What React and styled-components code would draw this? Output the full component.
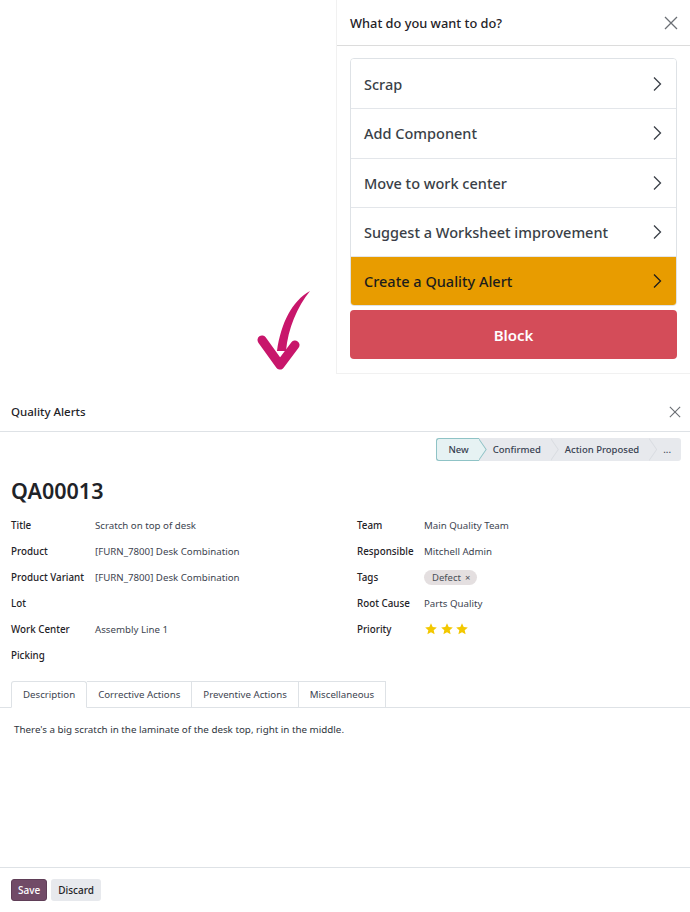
import React from 'react';
import styled, { createGlobalStyle } from 'styled-components';

const GlobalStyle = createGlobalStyle`
  html, body { margin: 0; padding: 0; background: #fff; }
  body { font-family: "Noto Sans", "Open Sans", sans-serif; color: #212529; }
  * { box-sizing: border-box; }
`;

const Page = styled.div`
  width: 690px;
  height: 912px;
  display: flex;
  flex-direction: column;
  overflow: hidden;
`;

// ------------------------- Top: action dialog

const TopRow = styled.div`
  display: flex;
  height: 374px;
`;

const ArrowArea = styled.div`
  flex: 1;
  display: flex;
  align-items: flex-end;
  justify-content: flex-end;
  padding: 0 22px 3px 0;
`;

const Panel = styled.div`
  width: 354px;
  border-left: 1px solid #f1f1f1;
  border-bottom: 1px solid #f1f1f1;
  display: flex;
  flex-direction: column;
`;

const PanelHeader = styled.div`
  height: 46px;
  padding: 0 12px 0 13px;
  display: flex;
  align-items: center;
  justify-content: space-between;
  border-bottom: 1px solid #dcdcdc;
  font-size: 12.8px;
  font-weight: 500;
  color: #1f2328;
`;

const PanelBody = styled.div`
  padding: 12px 13px 0;
  display: flex;
  flex-direction: column;
  gap: 4px;
`;

const ActionList = styled.div`
  border: 1px solid #dee2e6;
  border-radius: 4px;
  overflow: hidden;
`;

const ActionRow = styled.div`
  height: 49.25px;
  padding: 0 14px 0 13px;
  display: flex;
  align-items: center;
  justify-content: space-between;
  font-size: 14.5px;
  font-weight: 500;
  color: ${p => (p.$warning ? '#1c1c1c' : '#3a3f47')};
  background: ${p => (p.$warning ? '#e89c00' : '#fff')};
  border-top: ${p => (p.$first ? 'none' : '1px solid #e3e6ea')};
`;

const BlockBtn = styled.div`
  height: 49px;
  border-radius: 4px;
  background: #d44c59;
  color: #fff;
  display: flex;
  align-items: center;
  justify-content: center;
  font-size: 15px;
  font-weight: 600;
`;

const Chevron = () => (
  <svg width="10" height="16" viewBox="0 0 10 16">
    <path d="M2 1.5 L8.5 8 L2 14.5" fill="none" stroke="currentColor" strokeWidth="1.3" />
  </svg>
);

const CloseIcon = ({ size = 14, color = '#6b6f75' }) => (
  <svg width={size} height={size} viewBox="0 0 14 14">
    <path d="M1 1 L13 13 M13 1 L1 13" stroke={color} strokeWidth="1.3" fill="none" />
  </svg>
);

const CurvedArrow = () => (
  <svg width="60" height="82" viewBox="0 0 60 82">
    <path d="M56 2 C38 12 27 34 23 62 L32 62 C34 40 43 18 56 2 Z" fill="#c8166b" />
    <path d="M8 51 L26 76 L41 56" fill="none" stroke="#c8166b" strokeWidth="9" strokeLinecap="round" strokeLinejoin="round" />
  </svg>
);

// ------------------------- Form

const Form = styled.div`
  flex: 1;
  margin-top: 18px;
  display: flex;
  flex-direction: column;
`;

const FormHeader = styled.div`
  height: 40px;
  padding: 0 9px 0 11px;
  display: flex;
  align-items: center;
  justify-content: space-between;
  border-bottom: 1px solid #dee2e6;
  font-size: 11.5px;
  font-weight: 500;
  color: #1f2328;
`;

const StatusRow = styled.div`
  display: flex;
  justify-content: flex-end;
  padding: 6px 9px 0 0;
`;

const StatusBar = styled.div`
  display: flex;
  height: 23px;
  background: #e7e9ed;
  border-radius: 3px;
`;

const Stage = styled.div`
  position: relative;
  display: flex;
  align-items: center;
  padding: ${p => (p.$first ? '0 10px 0 11px' : '0 10px 0 14px')};
  font-size: 9.5px;
  font-weight: 500;
  color: #374151;
  background: ${p => (p.$active ? '#e6f2f3' : 'transparent')};
  border: ${p => (p.$active ? '1px solid #8fc3c6' : 'none')};
  border-right: none;
  border-radius: ${p => (p.$active ? '3px 0 0 3px' : '0')};
  z-index: ${p => (p.$active ? 2 : 1)};

  &::after {
    content: '';
    display: ${p => (p.$end ? 'none' : 'block')};
    position: absolute;
    right: -8px;
    top: ${p => (p.$active ? '-1px' : '0')};
    width: 8px;
    height: 23px;
    background: ${p => (p.$active ? '#8fc3c6' : '#d9dce1')};
    clip-path: polygon(0 0, 100% 50%, 0 100%, 0 94%, 86% 50%, 0 6%);
  }

  &::before {
    content: '';
    display: ${p => (p.$active ? 'block' : 'none')};
    position: absolute;
    right: -7px;
    top: 0;
    width: 7px;
    height: 21px;
    background: #e6f2f3;
    clip-path: polygon(0 0, 100% 50%, 0 100%);
  }
`;

const Sheet = styled.div`
  padding: 15px 11px 0;
`;

const RecordName = styled.h1`
  margin: 0;
  height: 30px;
  line-height: 30px;
  font-size: 21.5px;
  font-weight: 600;
  color: #1f2328;
`;

const Columns = styled.div`
  margin-top: 6px;
  display: grid;
  grid-template-columns: 346px 1fr;
`;

const FieldGroup = styled.div`
  display: grid;
  grid-template-columns: ${p => p.$labelWidth}px 1fr;
  grid-auto-rows: 26px;
  align-items: center;
`;

const Label = styled.div`
  font-size: 9.8px;
  font-weight: 500;
  color: #1f2328;
`;

const Value = styled.div`
  font-size: 9.7px;
  color: #3d4450;
  display: flex;
  align-items: center;
  gap: 1.5px;
`;

const Tag = styled.span`
  display: inline-flex;
  align-items: center;
  gap: 4px;
  height: 15px;
  padding: 0 7px 0 8px;
  border-radius: 8px;
  background: #e4dfe0;
  color: #4a4f57;
  font-size: 9.5px;
`;

const Star = () => (
  <svg width="14" height="14" viewBox="0 0 24 24">
    <path d="M12 2 L14.9 8.6 L22 9.3 L16.6 14.1 L18.2 21.2 L12 17.5 L5.8 21.2 L7.4 14.1 L2 9.3 L9.1 8.6 Z" fill="#f3c800" />
  </svg>
);

const Tabs = styled.div`
  margin-top: 13px;
  display: flex;
  padding-left: 11px;
  border-bottom: 1px solid #dee2e6;
`;

const Tab = styled.div`
  height: 27px;
  padding: 0 11px;
  margin-bottom: -1px;
  display: flex;
  align-items: center;
  font-size: 9.7px;
  color: #3d4450;
  background: #fff;
  border: 1px solid #dee2e6;
  border-left: ${p => (p.$first ? '1px solid #dee2e6' : 'none')};
  border-bottom: ${p => (p.$active ? '1px solid #fff' : '1px solid #dee2e6')};
  border-radius: ${p => (p.$active ? '3px 3px 0 0' : '0')};
`;

const TabContent = styled.div`
  flex: 1;
  padding: 15px 14px;
  font-size: 9.8px;
  color: #2f3540;
`;

const Footer = styled.div`
  height: 45px;
  border-top: 1px solid #dee2e6;
  padding: 11px 11px 0;
  display: flex;
  gap: 4px;
  align-items: flex-start;
`;

const Btn = styled.div`
  height: 22px;
  padding: 0 ${p => (p.$primary ? '6px' : '7px')};
  border-radius: 3px;
  display: flex;
  align-items: center;
  font-size: 10px;
  font-weight: 500;
  background: ${p => (p.$primary ? '#714b67' : '#e7e9ed')};
  color: ${p => (p.$primary ? '#fff' : '#1f2328')};
  border: ${p => (p.$primary ? '1px solid #5f3e57' : 'none')};
`;

const actions = ['Scrap', 'Add Component', 'Move to work center', 'Suggest a Worksheet improvement'];

const leftFields = [
  ['Title', 'Scratch on top of desk'],
  ['Product', '[FURN_7800] Desk Combination'],
  ['Product Variant', '[FURN_7800] Desk Combination'],
  ['Lot', ''],
  ['Work Center', 'Assembly Line 1'],
  ['Picking', ''],
];

const tabs = ['Description', 'Corrective Actions', 'Preventive Actions', 'Miscellaneous'];

export default function App() {
  return (
    <Page>
      <GlobalStyle />
      <TopRow>
        <ArrowArea>
          <CurvedArrow />
        </ArrowArea>
        <Panel>
          <PanelHeader>
            What do you want to do?
            <CloseIcon />
          </PanelHeader>
          <PanelBody>
            <ActionList>
              {actions.map((a, i) => (
                <ActionRow key={a} $first={i === 0}>
                  {a}
                  <Chevron />
                </ActionRow>
              ))}
              <ActionRow $warning>
                Create a Quality Alert
                <Chevron />
              </ActionRow>
            </ActionList>
            <BlockBtn>Block</BlockBtn>
          </PanelBody>
        </Panel>
      </TopRow>

      <Form>
        <FormHeader>
          Quality Alerts
          <CloseIcon size={12} />
        </FormHeader>
        <StatusRow>
          <StatusBar>
            <Stage $active $first>New</Stage>
            <Stage>Confirmed</Stage>
            <Stage>Action Proposed</Stage>
            <Stage $end>...</Stage>
          </StatusBar>
        </StatusRow>
        <Sheet>
          <RecordName>QA00013</RecordName>
          <Columns>
            <FieldGroup $labelWidth={84}>
              {leftFields.map(([l, v]) => (
                <React.Fragment key={l}>
                  <Label>{l}</Label>
                  <Value>{v}</Value>
                </React.Fragment>
              ))}
            </FieldGroup>
            <FieldGroup $labelWidth={67}>
              <Label>Team</Label>
              <Value>Main Quality Team</Value>
              <Label>Responsible</Label>
              <Value>Mitchell Admin</Value>
              <Label>Tags</Label>
              <Value><Tag>Defect <span>×</span></Tag></Value>
              <Label>Root Cause</Label>
              <Value>Parts Quality</Value>
              <Label>Priority</Label>
              <Value><Star /><Star /><Star /></Value>
            </FieldGroup>
          </Columns>
        </Sheet>
        <Tabs>
          {tabs.map((t, i) => (
            <Tab key={t} $first={i === 0} $active={i === 0}>{t}</Tab>
          ))}
        </Tabs>
        <TabContent>
          There's a big scratch in the laminate of the desk top, right in the middle.
        </TabContent>
        <Footer>
          <Btn $primary>Save</Btn>
          <Btn>Discard</Btn>
        </Footer>
      </Form>
    </Page>
  );
}
